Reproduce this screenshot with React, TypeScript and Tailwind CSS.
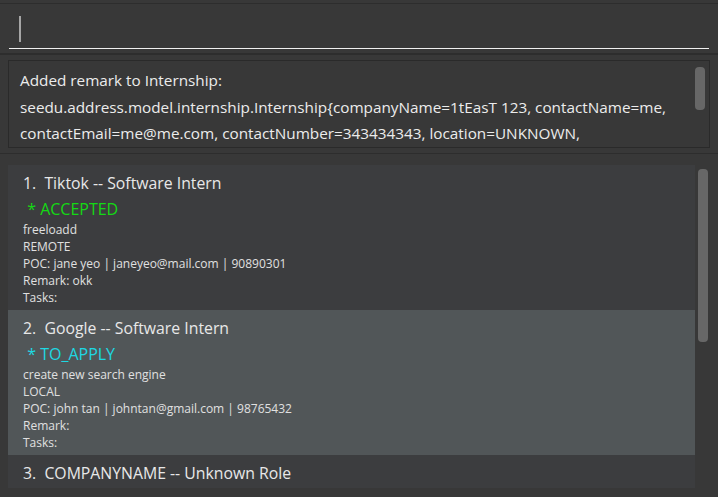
import React from 'react';

type Internship = {
  company: string;
  role: string;
  status?: string;
  statusColor?: string;
  description?: string;
  location?: string;
  poc?: string;
  remark?: string;
};

const internships: Internship[] = [
  {
    company: 'Tiktok',
    role: 'Software Intern',
    status: 'ACCEPTED',
    statusColor: 'text-[#14d914]',
    description: 'freeloadd',
    location: 'REMOTE',
    poc: 'jane yeo | janeyeo@mail.com | 90890301',
    remark: 'okk',
  },
  {
    company: 'Google',
    role: 'Software Intern',
    status: 'TO_APPLY',
    statusColor: 'text-[#1ed8e2]',
    description: 'create new search engine',
    location: 'LOCAL',
    poc: 'john tan | johntan@gmail.com | 98765432',
    remark: '',
  },
  // only the header of the third card is in view
  { company: 'COMPANYNAME', role: 'Unknown Role' },
];

function InternshipCard({ item, index }: { item: Internship; index: number }) {
  const selected = index === 1;
  return (
    <div
      className={`shrink-0 pl-[15px] pt-[5px] ${item.status ? 'h-[145px]' : 'h-[33px]'} ${
        selected ? 'bg-[#515658]' : 'bg-[#3c3d3f]'
      }`}
    >
      <div className="h-[27px] whitespace-pre text-[15.8px] leading-[26px] text-[#e8e8e8]">
        {index + 1}.  {item.company} -- {item.role}
      </div>
      {item.status && (
        <>
          <div className={`h-[24px] whitespace-pre text-[16px] leading-[24px] ${item.statusColor}`}>
            {' * ' + item.status}
          </div>
          <div className="text-[12px] leading-[17px] text-[#e0e0e0]">
            <div>{item.description}</div>
            <div>{item.location}</div>
            <div>POC: {item.poc}</div>
            <div>Remark: {item.remark}</div>
            <div>Tasks:</div>
          </div>
        </>
      )}
    </div>
  );
}

export default function App() {
  return (
    <div
      className="flex h-[497px] w-[718px] flex-col overflow-hidden bg-[#383838]"
      style={{ fontFamily: '"Open Sans", "Noto Sans", sans-serif' }}
    >
      {/* command box */}
      <div className="mt-[3px] h-[50px] shrink-0 border-t border-[#2d2d2d] px-[9px]">
        <div className="flex h-[45px] items-start border-b border-[#f0f0f0] pt-[12px] pl-[10px]">
          <div className="h-[26px] w-[2px] bg-[#a6a6a6]" />
        </div>
      </div>
      <div className="h-[2px] shrink-0 bg-[#2d2d2d]" />

      {/* result display */}
      <div className="shrink-0 px-[8px] pt-[5px] pb-[5px]">
        <div className="relative h-[88px] overflow-hidden border border-[#2a2a2a] pl-[11px] pt-[6px] text-[15.3px] leading-[26.5px] text-[#ececec]">
          <div>Added remark to Internship:</div>
          <div className="whitespace-nowrap">
            seedu.address.model.internship.Internship{'{'}companyName=1tEasT 123, contactName=me,
          </div>
          <div className="whitespace-nowrap">
            contactEmail=me@me.com, contactNumber=343434343, location=UNKNOWN,
          </div>
          <div className="absolute right-[4px] top-[6px] h-[43px] w-[10px] rounded-[4px] bg-[#676767]" />
        </div>
      </div>
      <div className="h-[1px] shrink-0 bg-[#2d2d2d]" />

      {/* list */}
      <div className="flex shrink-0 pt-[11px] pl-[8px]">
        <div className="flex h-[323px] w-[687px] flex-col overflow-hidden">
          {internships.map((item, i) => (
            <InternshipCard key={i} item={item} index={i} />
          ))}
        </div>
        <div className="ml-[3px] mt-[4px] h-[173px] w-[10px] rounded-[4px] bg-[#676767]" />
      </div>
    </div>
  );
}
